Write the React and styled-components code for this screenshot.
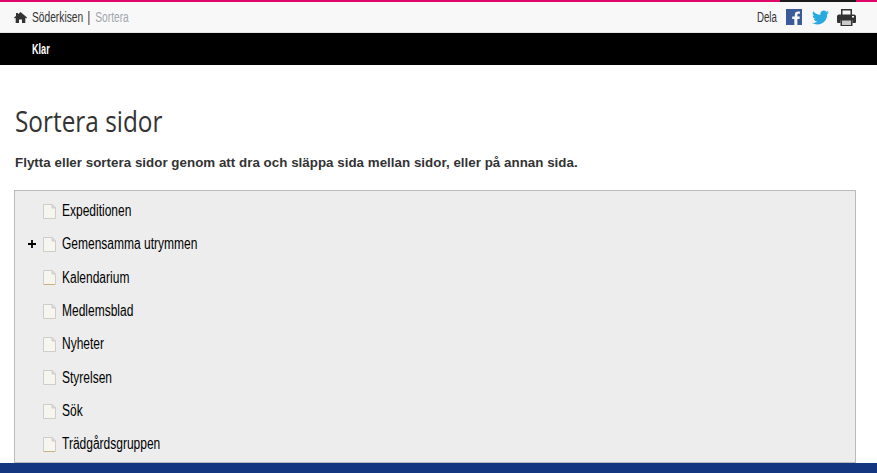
import React from 'react';
import styled, { createGlobalStyle } from 'styled-components';
import { FaTwitter } from 'react-icons/fa';

const GlobalStyle = createGlobalStyle`
  html, body {
    margin: 0;
    padding: 0;
    height: 100%;
    overflow: hidden;
    background: #fff;
  }
  #root {
    height: 100%;
  }
`;

const Page = styled.div`
  display: flex;
  flex-direction: column;
  height: 473px;
  overflow: hidden;
  font-family: "Liberation Sans", Arial, sans-serif;
`;

const AccentBar = styled.div`
  display: flex;
  flex: none;
  height: 2px;
  background: #e2066b;
`;

const AccentGap = styled.div`
  width: 76px;
  margin-left: 780px;
  background: #1a1a1a;
`;

const TopBar = styled.header`
  display: flex;
  flex: none;
  align-items: center;
  justify-content: space-between;
  box-sizing: border-box;
  height: 31px;
  padding: 0 21px 0 14px;
  background: #f8f8f8;
  border-bottom: 1px solid #e4e4e4;
  font-size: 14px;
  color: #333;
`;

const Crumbs = styled.nav`
  display: flex;
  align-items: center;
`;

const HomeIconSvg = styled.svg`
  flex: none;
  width: 13px;
  height: 11px;
  margin-right: 5px;
`;

const CrumbText = styled.div`
  display: flex;
  transform: scaleX(0.73);
  transform-origin: left center;
`;

const Crumb = styled.span`
  color: ${props => (props.$muted ? '#a2a6ad' : '#333')};
`;

const CrumbDivider = styled.span`
  margin: 0 7px 0 6px;
  color: #222;
`;

const Share = styled.div`
  display: flex;
  align-items: center;
`;

const ShareLabel = styled.span`
  margin-right: 9px;
  transform: scaleX(0.69);
  transform-origin: right center;
`;

const FacebookSvg = styled.svg`
  flex: none;
  width: 16px;
  height: 16px;
  margin-right: 10px;
`;

const Twitter = styled(FaTwitter)`
  width: 17px;
  height: 17px;
  margin-right: 8px;
  color: #29a9e1;
`;

const PrinterSvg = styled.svg`
  flex: none;
  width: 19px;
  height: 17px;
`;

const ActionBar = styled.div`
  display: flex;
  flex: none;
  align-items: center;
  height: 32px;
  padding-left: 32px;
  background: #000;
`;

const ActionLink = styled.a`
  font-size: 14px;
  font-weight: 700;
  color: #fff;
  transform: scaleX(0.65);
  transform-origin: left center;
`;

const Main = styled.main`
  display: flex;
  flex: 1;
  flex-direction: column;
  min-height: 0;
  padding: 0 21px 0 14px;
`;

const Title = styled.h1`
  margin: 37px 0 0 1px;
  font-family: "Open Sans", "Liberation Sans", sans-serif;
  font-size: 29px;
  font-weight: 400;
  line-height: 38px;
  color: #333;
  transform: scaleX(0.84);
  transform-origin: left center;
`;

const Intro = styled.p`
  margin: 15px 0 0 1px;
  font-size: 13.33px;
  font-weight: 700;
  line-height: 16px;
  letter-spacing: 0.03px;
  color: #333;
`;

const TreePanel = styled.ul`
  flex: 1;
  min-height: 0;
  margin: 19px 0 0;
  padding: 3.4px 0 0;
  overflow: hidden;
  list-style: none;
  background: #ededed;
  border: 1px solid #bbb;
`;

const TreeRow = styled.li`
  display: flex;
  align-items: center;
  height: 33.33px;
  padding-left: 13px;
  font-size: 16px;
  color: #000;
`;

const Toggle = styled.svg`
  flex: none;
  width: 8px;
  height: 8px;
  margin-right: 7px;
`;

const ToggleSpace = styled.span`
  flex: none;
  width: 8px;
  margin-right: 7px;
`;

const PageIconSvg = styled.svg`
  flex: none;
  width: 13px;
  height: 15px;
  margin-right: 6px;
`;

const TreeLabel = styled.span`
  white-space: nowrap;
  transform: scaleX(0.75);
  transform-origin: left center;
`;

const Footer = styled.footer`
  flex: none;
  height: 10px;
  background: #14357f;
`;

const HomeIcon = () => (
  <HomeIconSvg viewBox="0 0 13 11">
    <path d="M6.5 0 13 5.6l-.8.9-.9-.7V11H8V7.4H5V11H1.7V5.8l-.9.7L0 5.6 2 3.9V1h2v1.2z" fill="#333" />
  </HomeIconSvg>
);

const FacebookIcon = () => (
  <FacebookSvg viewBox="0 0 16 16">
    <path d="M0 0h16v16h-4.6V9.9h2.1l.3-2.4h-2.4V6c0-.7.2-1.2 1.2-1.2h1.3V2.6c-.2 0-1-.1-1.9-.1-1.900 0-3.200 1.100-3.200 3.300v1.700H6.200v2.400h2.100V16H0z" fill="#3b5a9a" />
  </FacebookSvg>
);

const PrinterIcon = () => (
  <PrinterSvg viewBox="0 0 19 17">
    <path d="M4 0h11v6H4z" fill="#333" />
    <path d="M5.500 1.500h8V6h-8z" fill="#f8f8f8" />
    <path d="M2 5.500h15a2 2 0 0 1 2 2V13a1 1 0 0 1-1 1h-2.500v-3h-12v3H1a1 1 0 0 1-1-1V7.500a2 2 0 0 1 2-2z" fill="#333" />
    <path d="M3.500 10h12v7h-12z" fill="#333" />
    <path d="M5 11.500h9V16H5z" fill="#c9c9c9" />
    <path d="M15 7h2v1.500h-2z" fill="#f8f8f8" />
  </PrinterSvg>
);

const PageIcon = ({ edge }) => (
  <PageIconSvg viewBox="0 0 13 15">
    <path d="M.5.500h8.500l3.500 3.500v10.500H.5z" fill="#f6f6ee" stroke="#cdcdcd" />
    <path d="M9 .5V4h3.500z" fill="#dedede" stroke="#cdcdcd" />
    {edge && <path d="M1 14.500h11" stroke={edge} />}
  </PageIconSvg>
);

const pages = [
  { name: 'Expeditionen' },
  { name: 'Gemensamma utrymmen', expandable: true },
  { name: 'Kalendarium', edge: '#c9b27a' },
  { name: 'Medlemsblad' },
  { name: 'Nyheter' },
  { name: 'Styrelsen' },
  { name: 'Sök' },
  { name: 'Trädgårdsgruppen', edge: '#c9b27a' },
];

const App = () => (
  <Page>
    <GlobalStyle />
    <AccentBar>
      <AccentGap />
    </AccentBar>
    <TopBar>
      <Crumbs>
        <HomeIcon />
        <CrumbText>
          <Crumb>Söderkisen</Crumb>
          <CrumbDivider>|</CrumbDivider>
          <Crumb $muted>Sortera</Crumb>
        </CrumbText>
      </Crumbs>
      <Share>
        <ShareLabel>Dela</ShareLabel>
        <FacebookIcon />
        <Twitter />
        <PrinterIcon />
      </Share>
    </TopBar>
    <ActionBar>
      <ActionLink>Klar</ActionLink>
    </ActionBar>
    <Main>
      <Title>Sortera sidor</Title>
      <Intro>Flytta eller sortera sidor genom att dra och släppa sida mellan sidor, eller på annan sida.</Intro>
      <TreePanel>
        {pages.map(page => (
          <TreeRow key={page.name}>
            {page.expandable ? (
              <Toggle viewBox="0 0 9 9">
                <path d="M3.500 0h2v3.500H9v2H5.500V9h-2V5.500H0v-2h3.500z" fill="#000" />
              </Toggle>
            ) : (
              <ToggleSpace />
            )}
            <PageIcon edge={page.edge} />
            <TreeLabel>{page.name}</TreeLabel>
          </TreeRow>
        ))}
      </TreePanel>
    </Main>
    <Footer />
  </Page>
);

export default App;
